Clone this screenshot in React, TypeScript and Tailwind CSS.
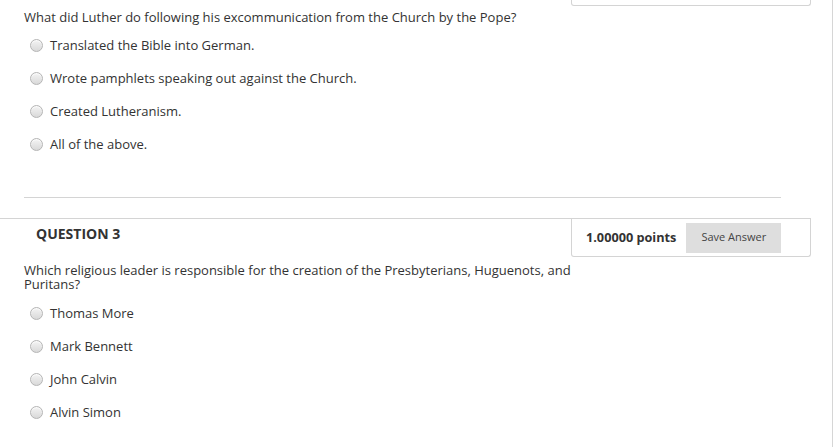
import React from 'react'

const font = { fontFamily: '"Open Sans", "Noto Sans", sans-serif' }

function Radio() {
  return (
    <span className="inline-block w-[13px] h-[13px] rounded-full border border-[#b5b5b5] bg-gradient-to-b from-[#f4f4f4] to-[#d9d9d9] shadow-[inset_0_1px_1px_rgba(255,255,255,0.8)]" />
  )
}

function Option({ label }: { label: string }) {
  return (
    <div className="flex items-center h-[33px] pl-[30px]">
      <Radio />
      <span className="ml-[7px] text-[13px] text-[#333]">{label}</span>
    </div>
  )
}

export default function App() {
  return (
    <div className="w-[833px] h-[447px] bg-white border-r border-[#d6d6d6] overflow-hidden" style={font}>
      <div className="flex justify-end pr-[21px]">
        <div className="w-[240px] h-[6px] border-l border-b border-r border-[#d4d4d4] rounded-b-[3px]" />
      </div>

      <p className="mt-[4px] pl-[24px] text-[13px] leading-[14px] text-[#333]">
        What did Luther do following his excommunication from the Church by the Pope?
      </p>
      <div className="mt-[5px]">
        <Option label="Translated the Bible into German." />
        <Option label="Wrote pamphlets speaking out against the Church." />
        <Option label="Created Lutheranism." />
        <Option label="All of the above." />
      </div>

      <div className="mt-[36px] ml-[24px] w-[757px] border-t border-[#d4d4d4]" />
      <div className="mt-[20px] w-[811px] border-t border-[#d4d4d4]">
        <div className="flex justify-between">
          <h3 className="pl-[36px] pt-[4px] text-[14px] font-bold text-[#333]">QUESTION 3</h3>
          <div className="flex items-center w-[240px] h-[38px] border-l border-b border-r border-[#d4d4d4] rounded-b-[3px] pl-[14px]">
            <span className="text-[12.7px] font-bold text-[#333]">1.00000 points</span>
            <button className="ml-[10px] w-[95px] h-[30px] bg-[#dedede] text-[11px] text-[#444]">
              Save Answer
            </button>
          </div>
        </div>
        <p className="mt-[6px] pl-[24px] w-[590px] text-[13px] leading-[14px] text-[#333]">
          Which religious leader is responsible for the creation of the Presbyterians, Huguenots, and Puritans?
        </p>
        <div className="mt-[6px]">
          <Option label="Thomas More" />
          <Option label="Mark Bennett" />
          <Option label="John Calvin" />
          <Option label="Alvin Simon" />
        </div>
      </div>
    </div>
  )
}
